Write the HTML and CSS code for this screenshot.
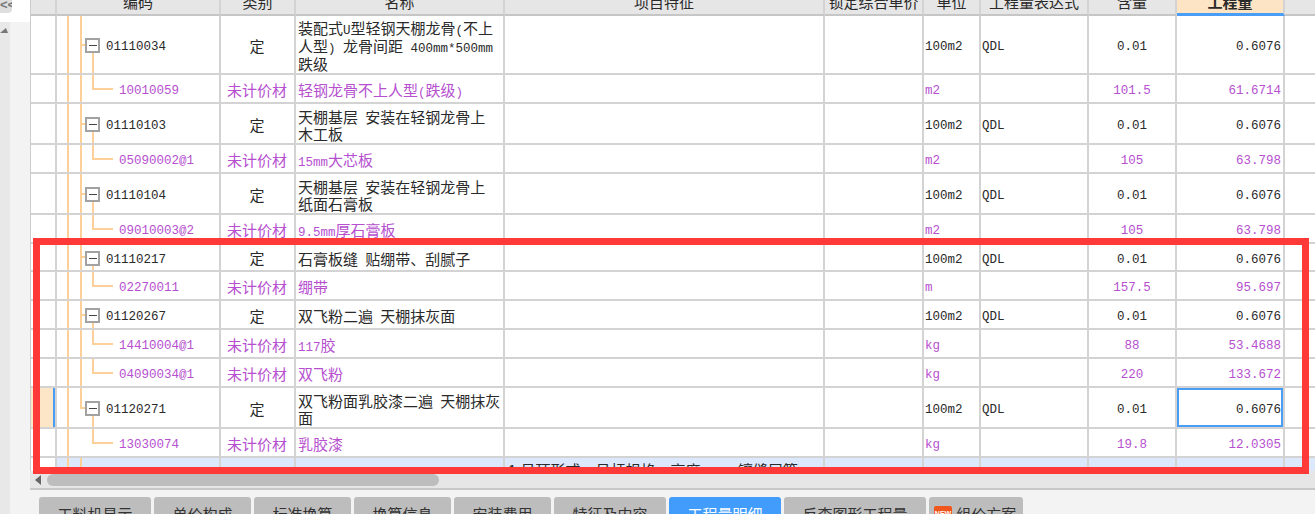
FILE: index.html
```html
<!DOCTYPE html>
<html lang="zh-CN">
<head>
    <meta charset="UTF-8">
    <meta name="viewport" content="width=device-width, initial-scale=1.0">
    <title>工程量明细</title>
    <link rel="stylesheet" href="styles.css">
</head>
<body>
    <div class="main">
        <div class="side">
            <div class="side-top"><span class="collapse">&lt;&lt;</span></div>
            <div class="side-rail"><span class="rail-arrow"></span></div>
        </div>
        <div class="content">
            <div class="sheet">
                <table class="grid">
                    <colgroup>
                        <col class="c-mark"><col class="c-code"><col class="c-kind"><col class="c-name"><col class="c-note">
                        <col class="c-price"><col class="c-unit"><col class="c-expr"><col class="c-qty"><col class="c-total"><col class="c-rest">
                    </colgroup>
                    <thead>
                        <tr>
                            <th></th><th>编码</th><th>类别</th><th>名称</th><th>项目特征</th><th>锁定综合单价</th><th>单位</th><th>工程量表达式</th><th>含量</th><th class="th-active">工程量</th><th></th>
                        </tr>
                    </thead>
                    <tbody>
                        <tr class="item h59">
                            <td></td><td class="code"><div class="tree"><span class="toggle"></span><span class="en">01110034</span></div></td><td class="kind">定</td>
                            <td class="name">装配式<span class="en">U</span>型轻钢天棚龙骨<span class="en">(</span>不上<br>人型<span class="en">) </span>龙骨间距<span class="en"> 400mm*500mm</span><br>跌级</td>
                            <td></td><td></td><td class="en unit">100m2</td><td class="en unit">QDL</td><td class="en qty">0.01</td><td class="en total">0.6076</td><td></td>
                        </tr>
                        <tr class="mat h29">
                            <td></td><td class="code en">10010059</td><td class="kind">未计价材</td><td class="name">轻钢龙骨不上人型<span class="en">(</span>跌级<span class="en">)</span></td>
                            <td></td><td></td><td class="en unit">m2</td><td></td><td class="en qty">101.5</td><td class="en total">61.6714</td><td></td>
                        </tr>
                        <tr class="item h41">
                            <td></td><td class="code"><div class="tree"><span class="toggle"></span><span class="en">01110103</span></div></td><td class="kind">定</td>
                            <td class="name">天棚基层 安装在轻钢龙骨上<br>木工板</td>
                            <td></td><td></td><td class="en unit">100m2</td><td class="en unit">QDL</td><td class="en qty">0.01</td><td class="en total">0.6076</td><td></td>
                        </tr>
                        <tr class="mat h29">
                            <td></td><td class="code en">05090002@1</td><td class="kind">未计价材</td><td class="name"><span class="en">15mm</span>大芯板</td>
                            <td></td><td></td><td class="en unit">m2</td><td></td><td class="en qty">105</td><td class="en total">63.798</td><td></td>
                        </tr>
                        <tr class="item h41">
                            <td></td><td class="code"><div class="tree"><span class="toggle"></span><span class="en">01110104</span></div></td><td class="kind">定</td>
                            <td class="name">天棚基层 安装在轻钢龙骨上<br>纸面石膏板</td>
                            <td></td><td></td><td class="en unit">100m2</td><td class="en unit">QDL</td><td class="en qty">0.01</td><td class="en total">0.6076</td><td></td>
                        </tr>
                        <tr class="mat h29">
                            <td></td><td class="code en">09010003@2</td><td class="kind">未计价材</td><td class="name"><span class="en">9.5mm</span>厚石膏板</td>
                            <td></td><td></td><td class="en unit">m2</td><td></td><td class="en qty">105</td><td class="en total">63.798</td><td></td>
                        </tr>
                        <tr class="item h28">
                            <td></td><td class="code"><div class="tree"><span class="toggle"></span><span class="en">01110217</span></div></td><td class="kind">定</td>
                            <td class="name">石膏板缝 贴绷带、刮腻子</td>
                            <td></td><td></td><td class="en unit">100m2</td><td class="en unit">QDL</td><td class="en qty">0.01</td><td class="en total">0.6076</td><td></td>
                        </tr>
                        <tr class="mat h29">
                            <td></td><td class="code en">02270011</td><td class="kind">未计价材</td><td class="name">绷带</td>
                            <td></td><td></td><td class="en unit">m</td><td></td><td class="en qty">157.5</td><td class="en total">95.697</td><td></td>
                        </tr>
                        <tr class="item h29">
                            <td></td><td class="code"><div class="tree"><span class="toggle"></span><span class="en">01120267</span></div></td><td class="kind">定</td>
                            <td class="name">双飞粉二遍 天棚抹灰面</td>
                            <td></td><td></td><td class="en unit">100m2</td><td class="en unit">QDL</td><td class="en qty">0.01</td><td class="en total">0.6076</td><td></td>
                        </tr>
                        <tr class="mat h29">
                            <td></td><td class="code en">14410004@1</td><td class="kind">未计价材</td><td class="name"><span class="en">117</span>胶</td>
                            <td></td><td></td><td class="en unit">kg</td><td></td><td class="en qty">88</td><td class="en total">53.4688</td><td></td>
                        </tr>
                        <tr class="mat h29">
                            <td></td><td class="code en">04090034@1</td><td class="kind">未计价材</td><td class="name">双飞粉</td>
                            <td></td><td></td><td class="en unit">kg</td><td></td><td class="en qty">220</td><td class="en total">133.672</td><td></td>
                        </tr>
                        <tr class="item h41 end-parent">
                            <td class="mark-on"></td><td class="code"><div class="tree"><span class="toggle"></span><span class="en">01120271</span></div></td><td class="kind">定</td>
                            <td class="name">双飞粉面乳胶漆二遍 天棚抹灰<br>面</td>
                            <td></td><td></td><td class="en unit">100m2</td><td class="en unit">QDL</td><td class="en qty">0.01</td><td class="en total cell-on">0.6076</td><td></td>
                        </tr>
                        <tr class="mat h29 end-child">
                            <td></td><td class="code en">13030074</td><td class="kind">未计价材</td><td class="name">乳胶漆</td>
                            <td></td><td></td><td class="en unit">kg</td><td></td><td class="en qty">19.8</td><td class="en total">12.0305</td><td></td>
                        </tr>
                        <tr class="group">
                            <td></td><td class="code"></td><td></td><td></td>
                            <td class="note">1.吊顶形式、吊杆规格、高度<span class="en"> m2</span>、镶缝层等</td>
                            <td></td><td></td><td></td><td></td><td></td><td></td>
                        </tr>
                    </tbody>
                </table>
            </div>
            <div class="hscroll">
                <span class="hscroll-arrow"></span>
                <span class="hscroll-thumb"></span>
            </div>
            <div class="tabs">
                <div class="tab">工料机显示</div>
                <div class="tab">单价构成</div>
                <div class="tab">标准换算</div>
                <div class="tab">换算信息</div>
                <div class="tab">安装费用</div>
                <div class="tab">特征及内容</div>
                <div class="tab tab-active">工程量明细</div>
                <div class="tab">反查图形工程量</div>
                <div class="tab tab-new">
                    <svg class="new-icon" width="18" height="13" viewBox="0 0 18 13">
                        <rect width="18" height="13" rx="2" fill="#f0561d"/>
                        <text x="9" y="9.5" font-size="7" font-weight="700" text-anchor="middle" fill="#fff" font-family="Liberation Sans, sans-serif">NEW</text>
                    </svg>
                    组价方案
                </div>
            </div>
        </div>
    </div>
    <div class="callout"></div>
</body>
</html>
```

FILE: styles.css
```css
html, body {
    height: 100%;
}
body {
    margin: 0;
    position: relative;
    overflow: hidden;
    background: #f3f3f3;
    color: #2a2a2a;
    font-family: "Noto Sans CJK SC", "Liberation Sans", sans-serif;
    font-size: 15px;
}
.main {
    display: flex;
    height: 100%;
}

/* left strip */
.side {
    width: 30px;
    flex: none;
    display: flex;
    flex-direction: column;
    background: #f3f3f3;
}
.side-top {
    height: 22px;
    background: #fff;
}
.collapse {
    display: block;
    width: 12px;
    height: 13px;
    overflow: hidden;
    background: #dedede;
    border-radius: 0 0 4px 0;
    color: #777;
    font: 700 13px/9px "Liberation Sans", sans-serif;
    text-align: right;
}
.side-rail {
    flex: 1;
    width: 10px;
    background: #e8e8e8;
    padding-top: 6px;
}
.rail-arrow {
    display: block;
    width: 0;
    height: 0;
    border-left: 6px solid transparent;
    border-right: 2px solid transparent;
    border-bottom: 5px solid #777;
}

.content {
    flex: 1;
    min-width: 0;
    display: flex;
    flex-direction: column;
}
.sheet {
    height: 471px;
    flex: none;
    overflow: hidden;
    background: #fff;
    border-left: 1px solid #ccc;
}

/* table */
.grid {
    width: 1285px;
    margin-top: -11px;
    table-layout: fixed;
    border-collapse: separate;
    border-spacing: 0;
}
.c-mark { width: 26px; }
.c-code { width: 164px; }
.c-kind { width: 75px; }
.c-name { width: 209px; }
.c-note { width: 320px; }
.c-price { width: 99px; }
.c-unit { width: 57px; }
.c-expr { width: 108px; }
.c-qty { width: 88px; }
.c-total { width: 108px; }
.c-rest { width: 31px; }

.grid th,
.grid td {
    box-sizing: border-box;
    padding: 0;
    border-right: 2px solid #d3d3d3;
    border-bottom: 2px solid #d3d3d3;
    overflow: hidden;
    white-space: nowrap;
    line-height: 17px;
}
.grid th:last-child,
.grid td:last-child {
    border-right: 0;
}
.grid th {
    height: 27px;
    background: #e6e6e6;
    font-weight: 400;
    border-bottom-color: #c6c6c6;
}
.grid .th-active {
    background: #fde4c4;
    font-weight: 700;
    border-bottom: 3px solid #4a9df5;
}
.h28 { height: 28px; }
.h29 { height: 29px; }
.h41 { height: 41px; }
.h59 { height: 59px; }

.en {
    font-family: "Liberation Mono", monospace;
    font-size: 12.5px;
    word-spacing: 0;
}
.grid td.en {
    padding-top: 6px;
}
.name .en,
.note .en {
    line-height: 12px;
}
.mat {
    color: #b650cf;
}
.grid .kind {
    text-align: center;
    padding: 1px 1px 0 0;
}
.grid .name {
    padding: 2px 0 0 2px;
    word-spacing: 4px;
}
.grid .unit {
    padding-left: 1px;
}
.qty {
    text-align: center;
}
.grid .total {
    text-align: right;
    padding-right: 2px;
}
.grid .mark-on {
    background: #fde6c8;
    box-shadow: inset -2px 0 0 #4a9df5;
}
.grid .cell-on {
    box-shadow: inset 0 0 0 2px #4a9df5;
}

/* tree lines drawn on the code cell */
.code {
    --tree: #fdd09a;
    --t: linear-gradient(var(--tree), var(--tree));
    background-image: var(--t), var(--t);
    background-repeat: no-repeat;
    background-size: 2px 100%, 2px 100%;
    background-position: 10px 0, 23px 0;
}
.item .code {
    background-image: var(--t), var(--t), var(--t), var(--t);
    background-size: 2px 100%, 2px 100%, 5px 2px, 2px 50%;
    background-position: 10px 0, 23px 0, 23px 50%, 35px 100%;
}
.grid .mat .code {
    padding-left: 62px;
    background-image: var(--t), var(--t), var(--t), var(--t);
    background-size: 2px 100%, 2px 100%, 21px 2px, 2px 50%;
    background-position: 10px 0, 23px 0, 35px 50%, 35px 0;
}
.end-parent .code {
    background-size: 2px 100%, 2px 50%, 5px 2px, 2px 50%;
}
.grid .end-child .code {
    background-image: var(--t), var(--t), var(--t);
    background-size: 2px 100%, 21px 2px, 2px 50%;
    background-position: 10px 0, 35px 50%, 35px 0;
}
.tree {
    display: flex;
    align-items: center;
    padding: 2px 0 0 28px;
}
.tree .en {
    padding-top: 4px;
}
.toggle {
    width: 15px;
    height: 15px;
    box-sizing: border-box;
    margin-right: 6px;
    border: 2px solid #a2a2a2;
    background: linear-gradient(#444, #444) center / 8px 1px no-repeat #fff;
}

/* half visible row at the bottom */
.group {
    height: 60px;
}
.group td {
    background-color: #dce9fc;
    vertical-align: top;
}
.grid .group td:first-child {
    background: #fff;
}
.grid .group .note {
    padding: 3px 0 0 3px;
}

/* horizontal scrollbar */
.hscroll {
    height: 19px;
    flex: none;
    display: flex;
    align-items: center;
    padding-left: 5px;
    padding-top: 1px;
    box-sizing: border-box;
    background: #e6e6e6;
    border-bottom: 2px solid #c8c8c8;
}
.hscroll-arrow {
    width: 0;
    height: 0;
    border-top: 5px solid transparent;
    border-bottom: 5px solid transparent;
    border-right: 6px solid #666;
}
.hscroll-thumb {
    width: 392px;
    height: 12px;
    margin-left: 6px;
    border-radius: 6px;
    background: #bdbdbd;
}

/* bottom tabs */
.tabs {
    display: flex;
    gap: 3px;
    padding: 7px 0 0 9px;
}
.tab {
    flex: none;
    height: 30px;
    padding: 7px 18.5px 0;
    box-sizing: border-box;
    border-radius: 3px 3px 0 0;
    background: #bdbdbd;
    color: #333;
    line-height: 20px;
}
.tab-active {
    background: #429cfb;
    color: #fff;
}
.tab-new {
    padding: 7px 7px 0 5px;
    display: flex;
    align-items: flex-start;
    gap: 4px;
}
.new-icon {
    margin-top: 2px;
}

/* red marker drawn on top of the screenshot */
.callout {
    position: absolute;
    left: 33px;
    top: 238px;
    width: 1276px;
    height: 236px;
    box-sizing: border-box;
    border: 7px solid #ff3838;
    pointer-events: none;
}
```
